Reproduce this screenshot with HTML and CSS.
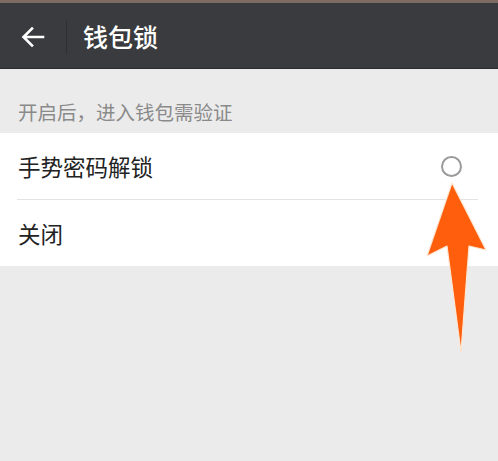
FILE: index.html
```html
<!DOCTYPE html>
<html lang="zh">
<head>
<meta charset="utf-8">
<title>钱包锁</title>
<link rel="stylesheet" href="styles.css">
</head>
<body>
<div class="page">
  <div class="topstrip"></div>
  <header class="bar">
    <div class="back">
      <svg width="24" height="22" viewBox="0 0 24 22"><path d="M22 11H3M11 2.5L2.5 11L11 19.5" fill="none" stroke="#fff" stroke-width="2.6" stroke-linecap="square"/></svg>
    </div>
    <div class="sep"></div>
    <h1 class="title">钱包锁</h1>
  </header>
  <div class="hint">开启后，进入钱包需验证</div>
  <div class="list">
    <div class="row">
      <span class="label">手势密码解锁</span>
      <span class="radio"></span>
    </div>
    <div class="divider"></div>
    <div class="row">
      <span class="label">关闭</span>
    </div>
  </div>
  <svg class="pointer" viewBox="0 0 498 461" width="498" height="461">
    <polygon points="452,183 486,250 469,246 461,352 447,246 427,256" fill="#ff5f0c" stroke="#fde6d2" stroke-width="1.2" stroke-linejoin="round"/>
  </svg>
</div>
</body>
</html>
```
FILE: styles.css
```css
html, body {
  margin: 0;
  padding: 0;
  background: #ebebeb;
}
.page {
  position: relative;
  width: 498px;
  height: 461px;
  overflow: hidden;
  font-family: "Noto Sans CJK SC", "Noto Sans", sans-serif;
  background: #ebebeb;
}
.topstrip {
  height: 3px;
  background: #7d6b62;
}
.bar {
  height: 65px;
  background: #3a3b3e;
  border-bottom: 1px solid #2b2c2e;
  display: flex;
  align-items: center;
}
.back {
  width: 66px;
  display: flex;
  align-items: center;
  padding-left: 21px;
  box-sizing: border-box;
  margin-top: 2px;
}
.back svg { display: block; }
.sep {
  width: 1px;
  height: 34px;
  background: #2e2f31;
  margin-top: 2px;
}
.title {
  margin: 2px 0 0 16px;
  font-size: 25px;
  font-weight: 500;
  color: #fff;
  line-height: 1;
}
.hint {
  height: 64px;
  box-sizing: border-box;
  padding: 32px 0 0 18px;
  font-size: 19.5px;
  line-height: 22px;
  color: #8a8a8a;
}
.list {
  background: #fff;
}
.row {
  height: 66px;
  display: flex;
  align-items: center;
  justify-content: space-between;
  padding: 0 36px 0 18px;
}
.label {
  font-size: 22.5px;
  color: #222;
  line-height: 1;
}
.radio {
  width: 17px;
  height: 17px;
  border: 2px solid #9a9a9a;
  border-radius: 50%;
}
.divider {
  height: 1px;
  background: #e3e3e3;
  margin: 0 20px 0 17px;
}
.pointer {
  position: absolute;
  left: 0;
  top: 0;
  pointer-events: none;
}
```
